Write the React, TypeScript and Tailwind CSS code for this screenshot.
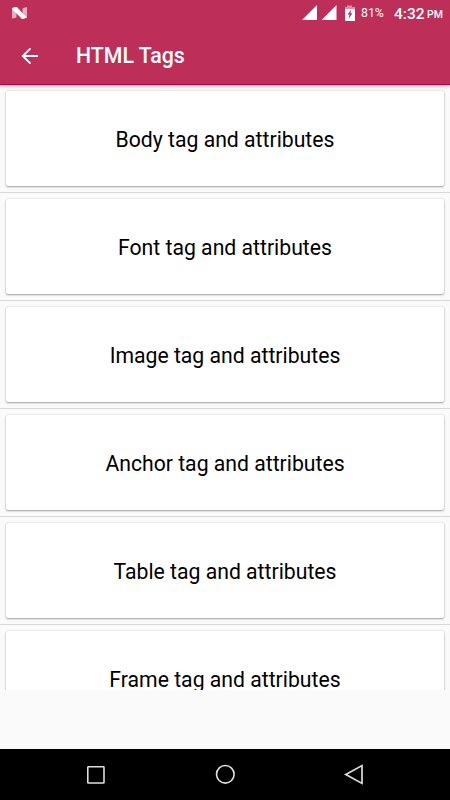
import React from "react";

const tags = ["Body", "Font", "Image", "Anchor", "Table", "Frame"];

function StatusBar() {
  return (
    <div className="flex h-[27px] items-start text-white">
      <svg className="ml-[11px] mt-[6px]" width="17" height="14" viewBox="0 0 17 14">
        <path d="M1 2v10.800L5.500 11.500V5zM11.500 2.300 16 1v11.200L11.500 9.500z" fill="#e6acbf" />
        <path d="M1.200 2.200Q3 .8 6.200 1.200L15.600 11.600Q13.500 13 11 12.900L1.200 3.200z" fill="#fff" />
      </svg>
      <svg className="ml-[273px] mt-[5px]" width="56" height="17" viewBox="0 0 56 17">
        <path d="M1 15 16 0v15zM20.500 15 35.500 0v15z" fill="#fff" />
        <path d="M46 .5h5V2h3v3H44V2h2z" fill="#dc8fa7" />
        <path d="M44 4h10v12H44z" fill="#fff" />
        <path d="M50.300 4.500 46.500 9.500h2l-.8 4.500 3.700-5.800h-2z" fill="#bd2f59" />
      </svg>
      <span className="ml-[4px] mt-[5px] w-[33px] whitespace-nowrap text-[12.300px] leading-[17px] text-white">81%</span>
      <span className="whitespace-nowrap text-[15.500px] font-medium leading-[28px]">4:32</span>
      <span className="ml-[2.500px] mt-[6px] text-[10.500px] font-medium leading-[18px]">PM</span>
    </div>
  );
}

function TagRow({ name }: { name: string }) {
  return (
    <div className="h-[108px] shrink-0 border-b border-[#d9d9d9] px-[6px] pt-[6px]">
      <div className="flex h-[95px] items-center justify-center rounded-[2px] bg-white pt-[2px] text-[21.200px] text-black shadow-[0_1px_2px_rgba(0,0,0,0.34),0_0_2px_rgba(0,0,0,0.14)]">
        <span className="whitespace-nowrap leading-[26px]">{name} tag and attributes</span>
      </div>
    </div>
  );
}

export default function App() {
  return (
    <div className="flex h-[800px] w-[450px] flex-col overflow-hidden bg-[#fafafa] font-['Roboto',sans-serif]">
      <header className="z-10 h-[85px] shrink-0 border-b border-[#b80048] bg-[#bd2f59] shadow-[0_1px_4px_rgba(0,0,0,0.28)]">
        <StatusBar />
        <div className="flex h-[57px] items-center pl-[21px] text-white">
          <svg width="18" height="18" viewBox="0 0 18 18" fill="none" stroke="#fff" strokeWidth="1.900">
            <path d="M17 9H2M9.500 1.300 1.800 9l7.700 7.700" />
          </svg>
          <h1 className="ml-[37px] pt-px text-[21.300px] font-medium leading-[28px]">HTML Tags</h1>
        </div>
      </header>
      <main className="flex h-[605px] shrink-0 flex-col overflow-hidden">
        {tags.map((name) => (
          <TagRow key={name} name={name} />
        ))}
      </main>
      <nav className="mt-auto flex h-[51px] items-center bg-black pl-[86px]">
        <svg width="20" height="20" viewBox="0 0 20 20" fill="none" stroke="#dedede" strokeWidth="1.600">
          <rect x="1.800" y="1.800" width="16.200" height="16.200" rx=".6" />
        </svg>
        <svg className="ml-[109px]" width="21" height="21" viewBox="0 0 21 21" fill="none" stroke="#dedede" strokeWidth="1.600">
          <circle cx="10.300" cy="10.300" r="8.800" />
        </svg>
        <svg className="ml-[108px]" width="20" height="22" viewBox="0 0 20 22" fill="none" stroke="#dedede" strokeWidth="1.700">
          <path d="M18 1.600v17.800L1.800 10.500z" />
        </svg>
      </nav>
    </div>
  );
}
